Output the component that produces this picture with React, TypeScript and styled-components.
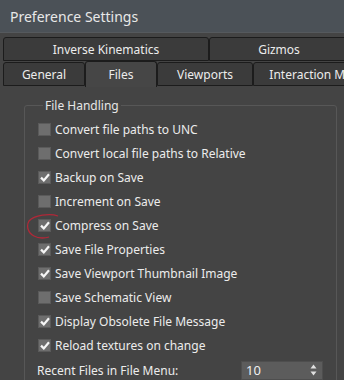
import React, { FunctionComponent } from 'react';
import styled, { createGlobalStyle } from 'styled-components';

interface TabProps {
	width: number;
	active?: boolean;
}

interface OptionItem {
	label: string;
	checked: boolean;
}

const options: OptionItem[] = [
	{ label: 'Convert file paths to UNC', checked: false },
	{ label: 'Convert local file paths to Relative', checked: false },
	{ label: 'Backup on Save', checked: true },
	{ label: 'Increment on Save', checked: false },
	{ label: 'Compress on Save', checked: true },
	{ label: 'Save File Properties', checked: true },
	{ label: 'Save Viewport Thumbnail Image', checked: true },
	{ label: 'Save Schematic View', checked: false },
	{ label: 'Display Obsolete File Message', checked: true },
	{ label: 'Reload textures on change', checked: true },
];

const GlobalStyle = createGlobalStyle`
	html, body {
		margin: 0;
		padding: 0;
		background: #444444;
	}
	body {
		font-family: 'Noto Sans', 'DejaVu Sans', sans-serif;
		color: #e6e6e6;
	}
`;

const Window = styled.div`
	width: 344px;
	height: 380px;
	overflow: hidden;
	background: #444444;
	display: flex;
	flex-direction: column;
	position: relative;
`;

const TitleBar = styled.div`
	height: 33px;
	flex-shrink: 0;
	background: #4b5157;
	border-bottom: 1px solid #55595d;
	box-sizing: border-box;
	display: flex;
	align-items: center;
	padding-left: 10px;
	font-size: 14px;
	color: #e8e8e8;
`;

const TabArea = styled.div`
	padding: 3px 0 0 3px;
	display: flex;
	flex-direction: column;
	flex-shrink: 0;
	white-space: nowrap;
`;

const TabRow = styled.div`
	display: flex;
	align-items: flex-end;
	height: 25px;
`;

const Tab = styled.div<TabProps>`
	flex-shrink: 0;
	width: ${({ width }) => width}px;
	height: ${({ active }) => (active ? 26 : 24)}px;
	margin-bottom: ${({ active }) => (active ? -1 : 0)}px;
	box-sizing: border-box;
	border: 1px solid #1c1c1c;
	border-bottom: ${({ active }) => (active ? 'none' : '1px solid #1c1c1c')};
	border-radius: 3px 3px 0 0;
	background: ${({ active }) => (active ? '#464646' : '#3b3b3b')};
	display: flex;
	align-items: center;
	justify-content: center;
	font-size: 12px;
	color: #ececec;
	position: relative;
	z-index: ${({ active }) => (active ? 1 : 0)};
`;

const Panel = styled.div`
	flex: 1;
	background: #444444;
	padding: 11px 7px 0 24px;
`;

const GroupBox = styled.fieldset`
	margin: 0;
	padding: 3px 0 0 13px;
	border: 1px solid #575757;
	border-radius: 3px;
	height: 300px;
`;

const Legend = styled.legend`
	padding: 0 2px;
	margin-left: 5px;
	font-size: 12px;
	color: #e6e6e6;
`;

const OptionRow = styled.div`
	height: 24px;
	display: flex;
	align-items: center;
	gap: 4px;
	font-size: 12px;
	color: #ececec;
	white-space: nowrap;
`;

const Box = styled.span`
	width: 13px;
	height: 13px;
	box-sizing: border-box;
	flex-shrink: 0;
	background: #6e6e6e;
	border: 1px solid #5a5a5a;
	display: flex;
	align-items: center;
	justify-content: center;
`;

const SpinRow = styled.div`
	height: 26px;
	margin-left: -1px;
	display: flex;
	align-items: center;
	font-size: 12px;
	color: #ececec;
`;

const SpinLabel = styled.span`
	width: 204px;
	white-space: nowrap;
`;

const SpinBox = styled.div`
	width: 82px;
	height: 19px;
	box-sizing: border-box;
	background: #5c5c5c;
	border: 1px solid #4e4e4e;
	display: flex;
	align-items: center;
	justify-content: space-between;
	padding: 0 5px 0 4px;
	font-size: 13px;
	color: #f0f0f0;
`;

const Annotation = styled.svg`
	position: absolute;
	left: 26px;
	top: 213px;
	pointer-events: none;
`;

const Check: FunctionComponent = () => (
	<svg width='10' height='9' viewBox='0 0 10 9'>
		<path d='M1 4.6 L3.8 7.4 L9 1.2' fill='none' stroke='#f6f6f6' strokeWidth='2.2' />
	</svg>
);

const Arrows: FunctionComponent = () => (
	<svg width='7' height='12' viewBox='0 0 7 12'>
		<path d='M3.5 0.5 L6.5 4.5 L0.5 4.5 Z' fill='#e0e0e0' />
		<path d='M3.5 11.5 L6.5 7.5 L0.5 7.5 Z' fill='#e0e0e0' />
	</svg>
);

const App: FunctionComponent = () => (
	<Window>
		<GlobalStyle />
		<TitleBar>Preference Settings</TitleBar>
		<TabArea>
			<TabRow>
				<Tab width={206}>Inverse Kinematics</Tab>
				<Tab width={140}>Gizmos</Tab>
			</TabRow>
			<TabRow>
				<Tab width={82}>General</Tab>
				<Tab width={72} active>
					Files
				</Tab>
				<Tab width={96}>Viewports</Tab>
				<Tab width={130}>Interaction Mode</Tab>
			</TabRow>
		</TabArea>
		<Panel>
			<GroupBox>
				<Legend>File Handling</Legend>
				{options.map((o) => (
					<OptionRow key={o.label}>
						<Box>{o.checked && <Check />}</Box>
						{o.label}
					</OptionRow>
				))}
				<SpinRow>
					<SpinLabel>Recent Files in File Menu:</SpinLabel>
					<SpinBox>
						10
						<Arrows />
					</SpinBox>
				</SpinRow>
			</GroupBox>
		</Panel>
		<Annotation width='38' height='28' viewBox='0 0 38 28'>
			<path
				d='M32 3 C24 0 8 2 3 8 C0 13 2 20 8 23 C13 26 20 25 23 24'
				fill='none'
				stroke='#b02838'
				strokeWidth='1.3'
			/>
		</Annotation>
	</Window>
);

export default App;
